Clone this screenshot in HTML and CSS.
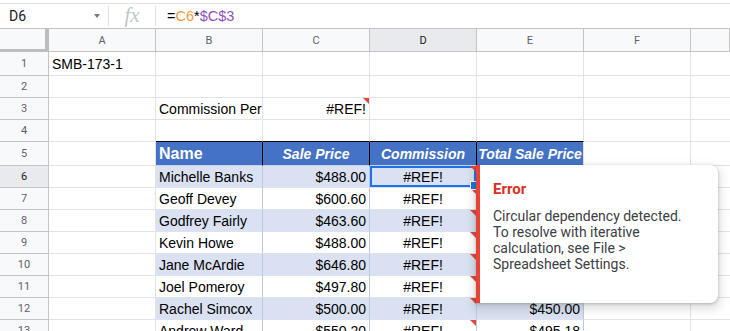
FILE: index.html
```html
<!DOCTYPE html>
<html lang="en">
<head>
    <meta charset="UTF-8">
    <title>Commission sheet</title>
    <link rel="stylesheet" href="styles.css">
</head>
<body>
    <div class="formula-bar">
        <div class="name-box">D6<span class="caret"></span></div>
        <div class="fx">fx</div>
        <div class="formula">=<span class="ref-a">C6</span>*<span class="ref-b">$C$3</span></div>
    </div>

    <div class="sheet">
        <!-- column headers -->
        <div class="corner"></div>
        <div class="ch">A</div>
        <div class="ch">B</div>
        <div class="ch">C</div>
        <div class="ch on">D</div>
        <div class="ch">E</div>
        <div class="ch">F</div>
        <div class="ch last"></div>

        <div class="rh">1</div>
        <div class="c">SMB-173-1</div>
        <div class="c"></div><div class="c"></div><div class="c"></div><div class="c"></div><div class="c"></div><div class="c last"></div>

        <div class="rh">2</div>
        <div class="c"></div><div class="c"></div><div class="c"></div><div class="c"></div><div class="c"></div><div class="c"></div><div class="c last"></div>

        <div class="rh">3</div>
        <div class="c"></div>
        <div class="c">Commission Per</div>
        <div class="c r err">#REF!</div>
        <div class="c"></div><div class="c"></div><div class="c"></div><div class="c last"></div>

        <div class="rh">4</div>
        <div class="c"></div>
        <div class="c above"></div><div class="c above"></div><div class="c above"></div><div class="c above"></div>
        <div class="c"></div><div class="c last"></div>

        <div class="rh">5</div>
        <div class="c"></div>
        <div class="c th name">Name</div>
        <div class="c th">Sale Price</div>
        <div class="c th">Commission</div>
        <div class="c th end">Total Sale Price</div>
        <div class="c"></div><div class="c last"></div>

        <!-- E6:E11 sit under the error popup -->
        <div class="rh on">6</div>
        <div class="c"></div>
        <div class="c tb band">Michelle Banks</div>
        <div class="c tb band r">$488.00</div>
        <div class="c tb band m err selected">#REF!</div>
        <div class="c tb band r"></div>
        <div class="c"></div><div class="c last"></div>

        <div class="rh">7</div>
        <div class="c"></div>
        <div class="c tb">Geoff Devey</div>
        <div class="c tb r">$600.60</div>
        <div class="c tb m err">#REF!</div>
        <div class="c tb r"></div>
        <div class="c"></div><div class="c last"></div>

        <div class="rh">8</div>
        <div class="c"></div>
        <div class="c tb band">Godfrey Fairly</div>
        <div class="c tb band r">$463.60</div>
        <div class="c tb band m err">#REF!</div>
        <div class="c tb band r"></div>
        <div class="c"></div><div class="c last"></div>

        <div class="rh">9</div>
        <div class="c"></div>
        <div class="c tb">Kevin Howe</div>
        <div class="c tb r">$488.00</div>
        <div class="c tb m err">#REF!</div>
        <div class="c tb r"></div>
        <div class="c"></div><div class="c last"></div>

        <div class="rh">10</div>
        <div class="c"></div>
        <div class="c tb band">Jane McArdie</div>
        <div class="c tb band r">$646.80</div>
        <div class="c tb band m err">#REF!</div>
        <div class="c tb band r"></div>
        <div class="c"></div><div class="c last"></div>

        <div class="rh">11</div>
        <div class="c"></div>
        <div class="c tb">Joel Pomeroy</div>
        <div class="c tb r">$497.80</div>
        <div class="c tb m err">#REF!</div>
        <div class="c tb r"></div>
        <div class="c"></div><div class="c last"></div>

        <div class="rh">12</div>
        <div class="c"></div>
        <div class="c tb band">Rachel Simcox</div>
        <div class="c tb band r">$500.00</div>
        <div class="c tb band m err">#REF!</div>
        <div class="c tb band r">$450.00</div>
        <div class="c"></div><div class="c last"></div>

        <div class="rh">13</div>
        <div class="c"></div>
        <div class="c tb">Andrew Ward</div>
        <div class="c tb r">$550.20</div>
        <div class="c tb m err">#REF!</div>
        <div class="c tb r">$495.18</div>
        <div class="c"></div><div class="c last"></div>

        <div class="error-card">
            <div class="error-title">Error</div>
            <div class="error-text">Circular dependency detected. To resolve with iterative calculation, see File &gt; Spreadsheet Settings.</div>
        </div>
    </div>
</body>
</html>
```

FILE: styles.css
```css
* {
    box-sizing: border-box;
}

body {
    margin: 0;
    width: 730px;
    height: 331px;
    overflow: hidden;
    background: #fff;
    color: #000;
    font-family: 'Liberation Sans', Arial, sans-serif;
    font-size: 14px;
}

/* formula bar */
.formula-bar {
    display: flex;
    align-items: center;
    height: 25px;
    margin-top: 3px;
    border-top: 1px solid #e1e1e1;
}

.name-box {
    display: flex;
    align-items: center;
    width: 109px;
    height: 20px;
    padding-left: 9px;
    border-right: 1px solid #e1e1e1;
    font-family: 'Roboto', sans-serif;
    font-size: 14px;
    color: #222;
}

.caret {
    margin-left: auto;
    margin-right: 8px;
    border-top: 4px solid #777;
    border-left: 3.5px solid transparent;
    border-right: 3.5px solid transparent;
}

.fx {
    width: 47px;
    height: 20px;
    line-height: 18px;
    text-align: center;
    border-right: 1px solid #e1e1e1;
    font-family: 'Liberation Serif', serif;
    font-style: italic;
    font-size: 21px;
    color: #c6c6c6;
}

.formula {
    padding-left: 11px;
    font-size: 14.5px;
    color: #000;
}

.ref-a {
    color: #f29c3d;
}

.ref-b {
    color: #8f4fc1;
}

/* grid */
.sheet {
    position: relative;
    display: grid;
    grid-template-columns: 49px repeat(6, 107px) 1fr;
    grid-template-rows: 23px 24px 22px 22px 22px 24px repeat(8, 22px);
    border-top: 1px solid #c4c4c4;
}

.c {
    position: relative;
    display: flex;
    align-items: center;
    padding: 0 3px;
    white-space: nowrap;
    overflow: hidden;
    border-right: 1px solid #e2e3e3;
    border-bottom: 1px solid #e2e3e3;
}

.last {
    border-right: none;
}

.corner {
    background: #f8f9fa;
    border-right: 4px solid #bdbdbd;
    border-bottom: 3px solid #bdbdbd;
}

.ch,
.rh {
    display: flex;
    align-items: center;
    justify-content: center;
    background: #f8f9fa;
    color: #5f6368;
    font-family: 'Roboto', sans-serif;
    font-size: 11px;
    border-right: 1px solid #c4c4c4;
    border-bottom: 1px solid #c4c4c4;
}

.ch.on,
.rh.on {
    background: #e8eaed;
    color: #202124;
}

.r {
    justify-content: flex-end;
}

.m {
    justify-content: center;
}

/* error marker in the corner of a cell */
.err::after {
    content: '';
    position: absolute;
    top: 0;
    right: 0;
    border-top: 6px solid #e0463a;
    border-left: 6px solid transparent;
}

/* table */
.above {
    border-bottom-color: #000;
}

.th {
    justify-content: center;
    background: #4472c4;
    color: #fff;
    font-weight: bold;
    font-style: italic;
    border-right-color: #000;
    border-bottom-color: #c9d2e8;
}

.th.name {
    justify-content: flex-start;
    font-style: normal;
    font-size: 16px;
}

.th.end {
    border-right-color: #e2e3e3;
}

.tb {
    border-right-color: #bcc8e4;
    border-bottom-color: #dde2ee;
}

.band {
    background: #d9e1f2;
}

.selected {
    overflow: visible;
    z-index: 1;
    box-shadow: inset 0 0 0 2px #1a73e8;
}

.selected::before {
    content: '';
    position: absolute;
    right: -3px;
    bottom: -3px;
    width: 7px;
    height: 7px;
    background: #1a73e8;
    border: 1px solid #fff;
}

/* error popup */
.error-card {
    position: absolute;
    left: 476px;
    top: 136px;
    z-index: 2;
    width: 242px;
    height: 138px;
    padding: 14px 28px 0 13px;
    background: #fff;
    border-left: 4px solid #ea4335;
    border-radius: 0 8px 8px 0;
    box-shadow: 0 1px 3px rgba(60, 64, 67, 0.3), 0 4px 8px 3px rgba(60, 64, 67, 0.15);
    font-family: 'Roboto', sans-serif;
}

.error-title {
    margin-bottom: 9px;
    line-height: 20px;
    font-size: 15px;
    font-weight: bold;
    color: #d93025;
}

.error-text {
    line-height: 16px;
    font-size: 14px;
    color: #3c4043;
}
```
